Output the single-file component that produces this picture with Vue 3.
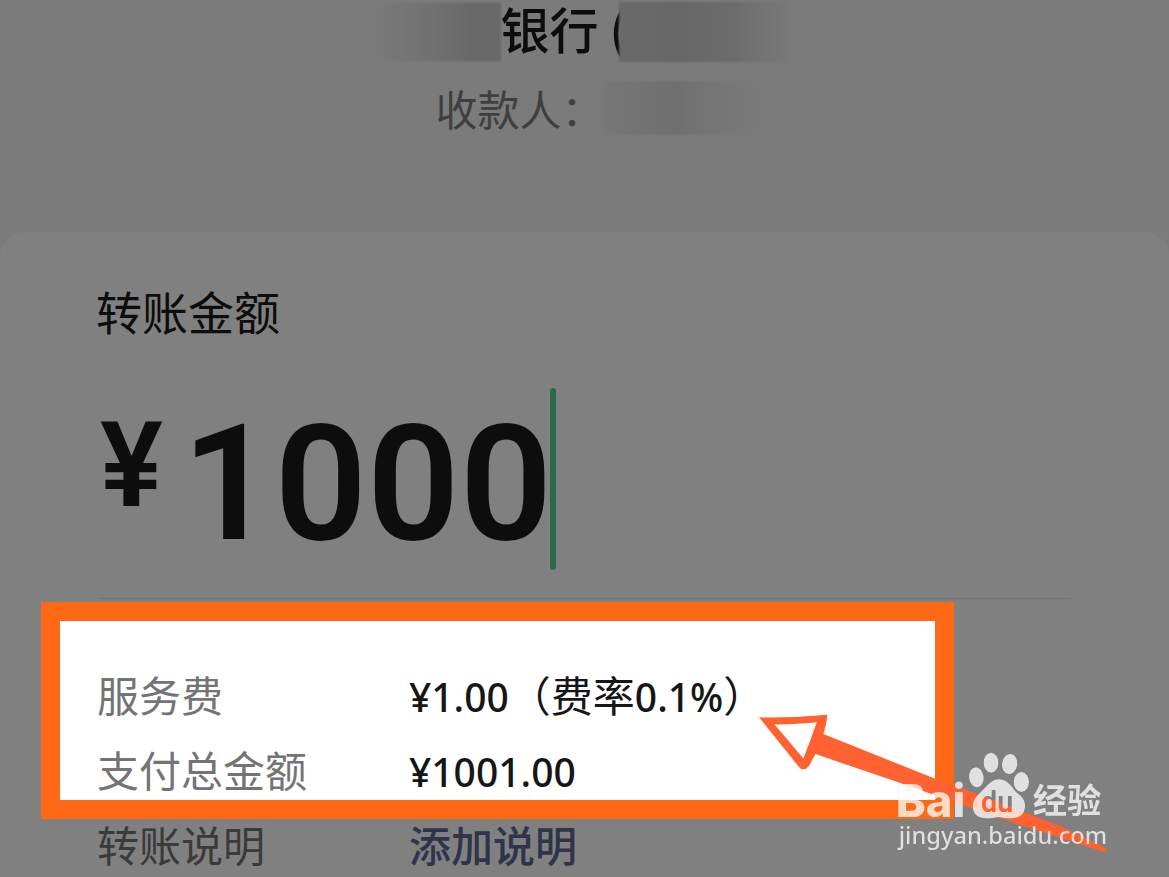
<script setup>
import { ref } from 'vue'

const amount = ref('1000')
const fees = [
  { label: '服务费', parts: [{ t: '¥1.00', n: true }, { t: '（费率' }, { t: '0.1%', n: true }, { t: '）' }] },
  { label: '支付总金额', parts: [{ t: '¥1001.00', n: true }] },
]
</script>

<template>
  <div class="page">
    <header class="payee">
      <div class="bank">
        <span class="smear smear-left"></span>
        <h1>银行&nbsp;(</h1>
        <span class="smear smear-right"></span>
      </div>
      <div class="person">
        <span>收款人：</span>
        <span class="smear smear-name"></span>
      </div>
    </header>

    <main class="card">
      <label class="title" for="amount">转账金额</label>
      <div class="amount">
        <span class="yen">¥</span>
        <input id="amount" v-model="amount" type="text" inputmode="decimal" />
        <span class="cursor"></span>
      </div>
      <hr />
      <section class="highlight">
        <dl>
          <div v-for="f in fees" :key="f.label" class="row">
            <dt>{{ f.label }}</dt>
            <dd><span v-for="p in f.parts" :key="p.t" :class="{ num: p.n }">{{ p.t }}</span></dd>
          </div>
        </dl>
        <svg class="arrow" viewBox="0 0 1100 460" aria-hidden="true">
          <path fill="#ff6230" fill-rule="evenodd" d="M57 52Q160 54 262 44Q260 70 250 102L585 236L700 278L960 378L1100 444Q1102 455 1090 455L850 378L640 305L470 245L226 162L207 198Q190 218 176 200Q120 130 57 52ZM103 73L190 175Q212 120 230 67Q160 74 103 73Z" />
        </svg>
      </section>
      <div class="row note">
        <span>转账说明</span>
        <button type="button">添加说明</button>
      </div>
    </main>

    <svg class="watermark" viewBox="0 0 660 360" role="img" aria-label="Baidu 经验">
      <defs>
        <mask id="pad-mask" maskUnits="userSpaceOnUse" x="0" y="0" width="660" height="360">
          <rect width="660" height="360" fill="#fff" />
          <text class="du" x="273" y="215">du</text>
        </mask>
      </defs>
      <g class="mark">
        <text class="bai" x="17" y="230">Bai</text>
        <ellipse cx="259" cy="112" rx="22" ry="30" transform="rotate(-8 259 112)" />
        <ellipse cx="303" cy="68" rx="22" ry="30" />
        <ellipse cx="359" cy="72" rx="23" ry="30" transform="rotate(8 359 72)" />
        <ellipse cx="394" cy="126" rx="23" ry="30" />
        <path mask="url(#pad-mask)" d="M328 118C300 118 292 140 270 158C248 178 244 198 252 216C264 240 300 237 326 231C352 237 389 240 401 217C411 195 403 175 386 163C365 145 356 118 328 118Z" />
        <text class="jy" x="428" y="220">经验</text>
        <text class="url" x="26" y="312">jingyan.baidu.com</text>
      </g>
    </svg>
  </div>
</template>

<style>
body {
  margin: 0;
  background: #808080;
}
</style>

<style scoped>
.page {
  position: relative;
  min-height: 100vh;
  overflow: hidden;
  background: #7b7b7b;
  color: #0d0d0d;
  font-family: "Noto Sans CJK SC", sans-serif;
}
.payee {
  display: flex;
  flex-direction: column;
  align-items: center;
  gap: 16px;
  height: 232px;
}
.bank {
  display: flex;
  height: 64px;
  align-items: center;
}
h1 {
  margin: 0 -10px 0 0;
  width: 128px;
  height: 64px;
  white-space: nowrap;
  font-size: 49px;
  line-height: 56px;
  font-weight: 500;
}
.smear {
  position: relative;
  filter: blur(1px);
}
.smear-left {
  width: 128px;
  height: 58px;
  background: linear-gradient(90deg, #7b7b7b, #727272 40%, #686868 80%, #696969);
}
.smear-right {
  width: 178px;
  height: 60px;
  background: linear-gradient(90deg, #696969, #676767 35%, #6d6d6d 65%, #7b7b7b);
}
.person {
  display: flex;
  align-items: center;
  height: 56px;
  padding-left: 34px;
  color: #3f3f3f;
  font-size: 42px;
  line-height: 56px;
}
.smear-name {
  width: 176px;
  height: 54px;
  margin-left: -12px;
  background: linear-gradient(90deg, #7b7b7b, #757575 15%, #707070 50%, #777 75%, #7b7b7b);
}
.card {
  min-height: calc(100vh - 232px);
  box-sizing: border-box;
  padding-top: 56px;
  border-radius: 24px 24px 0 0;
  background: #808080;
}
.title {
  display: block;
  height: 50px;
  margin-left: 96px;
  font-size: 46px;
  line-height: 44px;
}
.amount {
  display: flex;
  align-items: flex-start;
  height: 182px;
  margin: 50px 98px 28px 100px;
  font-family: Roboto, sans-serif;
  font-weight: 600;
}
.yen {
  width: 82px;
  font-size: 118px;
  line-height: 156px;
}
input {
  width: 380px;
  height: 192px;
  margin-right: -12px;
  padding: 0;
  border: 0;
  outline: 0;
  background: none;
  color: inherit;
  font: inherit;
  font-size: 162px;
  line-height: 192px;
}
.cursor {
  width: 6px;
  height: 182px;
  border-radius: 3px;
  background: #2c6a4c;
}
hr {
  height: 1px;
  margin: 0 98px 3px;
  border: 0;
  background: #757575;
}
.highlight {
  position: relative;
  margin: 0 215px 0 41px;
  padding: 48px 0 0 37px;
  border: 19px solid #ff6814;
  background: #fff;
}
dl {
  display: flex;
  flex-direction: column;
  gap: 19px;
  margin: 0;
}
.row {
  display: grid;
  grid-template-columns: 312px 1fr;
  height: 56px;
  font-size: 42px;
  line-height: 50px;
  white-space: nowrap;
}
dt {
  color: #747474;
}
dd {
  margin: 0;
  color: #161616;
}
.num {
  font-family: "Noto Sans", sans-serif;
  font-size: 39px;
  font-weight: 500;
  line-height: 1;
}
.note {
  margin-left: 97px;
  color: #3a3a3a;
}
button {
  align-self: start;
  justify-self: start;
  padding: 0;
  border: 0;
  background: none;
  color: #2f344a;
  font: inherit;
  font-weight: 500;
}
.arrow {
  position: absolute;
  left: 680px;
  top: 79px;
  width: 367px;
  overflow: visible;
  z-index: 1;
}
.watermark {
  position: absolute;
  right: 59px;
  bottom: 17px;
  width: 220px;
  height: 120px;
  z-index: 2;
}
.mark {
  fill: #fff;
  opacity: 0.76;
  filter: drop-shadow(0 0 1px rgba(0, 0, 0, 0.35));
}
.bai {
  font: 800 136px Inter, sans-serif;
}
.du {
  fill: #000;
  font: 600 86px Roboto, sans-serif;
}
.jy {
  font: 700 103px "Noto Sans CJK SC", sans-serif;
}
.url {
  font: 500 71px "Noto Sans", sans-serif;
}
</style>
